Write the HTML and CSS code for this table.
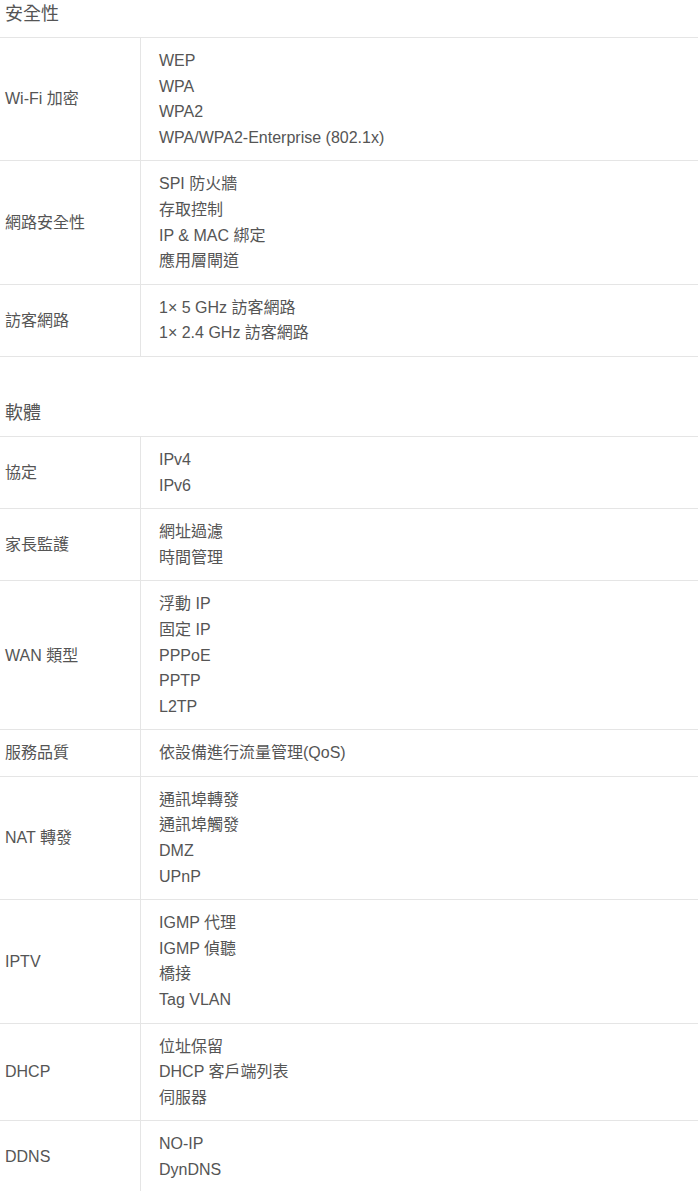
FILE: index.html
```html
<!DOCTYPE html>
<html lang="zh-Hant">
<head>
<meta charset="utf-8">
<title>規格</title>
<link rel="stylesheet" href="styles.css">
</head>
<body>
<section class="spec">
  <h3 class="spec-title">安全性</h3>
  <table class="spec-table">
    <tr><td class="label">Wi-Fi 加密</td><td class="value"><div>WEP</div><div>WPA</div><div>WPA2</div><div>WPA/WPA2-Enterprise (802.1x)</div></td></tr>
    <tr><td class="label">網路安全性</td><td class="value"><div>SPI 防火牆</div><div>存取控制</div><div>IP &amp; MAC 綁定</div><div>應用層閘道</div></td></tr>
    <tr><td class="label">訪客網路</td><td class="value"><div>1× 5 GHz 訪客網路</div><div>1× 2.4 GHz 訪客網路</div></td></tr>
  </table>
</section>
<section class="spec spec-next">
  <h3 class="spec-title">軟體</h3>
  <table class="spec-table">
    <tr><td class="label">協定</td><td class="value"><div>IPv4</div><div>IPv6</div></td></tr>
    <tr><td class="label">家長監護</td><td class="value"><div>網址過濾</div><div>時間管理</div></td></tr>
    <tr><td class="label">WAN 類型</td><td class="value"><div>浮動 IP</div><div>固定 IP</div><div>PPPoE</div><div>PPTP</div><div>L2TP</div></td></tr>
    <tr><td class="label">服務品質</td><td class="value"><div>依設備進行流量管理(QoS)</div></td></tr>
    <tr><td class="label">NAT 轉發</td><td class="value"><div>通訊埠轉發</div><div>通訊埠觸發</div><div>DMZ</div><div>UPnP</div></td></tr>
    <tr><td class="label">IPTV</td><td class="value"><div>IGMP 代理</div><div>IGMP 偵聽</div><div>橋接</div><div>Tag VLAN</div></td></tr>
    <tr><td class="label">DHCP</td><td class="value"><div>位址保留</div><div>DHCP 客戶端列表</div><div>伺服器</div></td></tr>
    <tr><td class="label">DDNS</td><td class="value"><div>NO-IP</div><div>DynDNS</div></td></tr>
  </table>
</section>
</body>
</html>
```

FILE: styles.css
```css
html, body {
  margin: 0;
  padding: 0;
  background: #fff;
}
body {
  font-family: "Liberation Sans", Arial, "Noto Sans CJK TC", sans-serif;
  font-size: 16px;
  color: #555;
  width: 698px;
}
.spec-next {
  margin-top: 42px;
}
.spec-title {
  margin: 0;
  padding: 1px 5px 0 5px;
  height: 36px;
  line-height: 27px;
  font-size: 18px;
  font-weight: normal;
  color: #555;
}
.spec-table {
  width: 100%;
  border-collapse: collapse;
  border-top: 1px solid #e5e5e5;
}
.spec-table td {
  border-bottom: 1px solid #e5e5e5;
  vertical-align: middle;
  padding: 10px 0;
  line-height: 25.6px;
}
.spec-table .label {
  width: 135px;
  padding-left: 5px;
  border-right: 1px solid #e5e5e5;
}
.spec-table .value {
  padding-left: 18px;
}
```
